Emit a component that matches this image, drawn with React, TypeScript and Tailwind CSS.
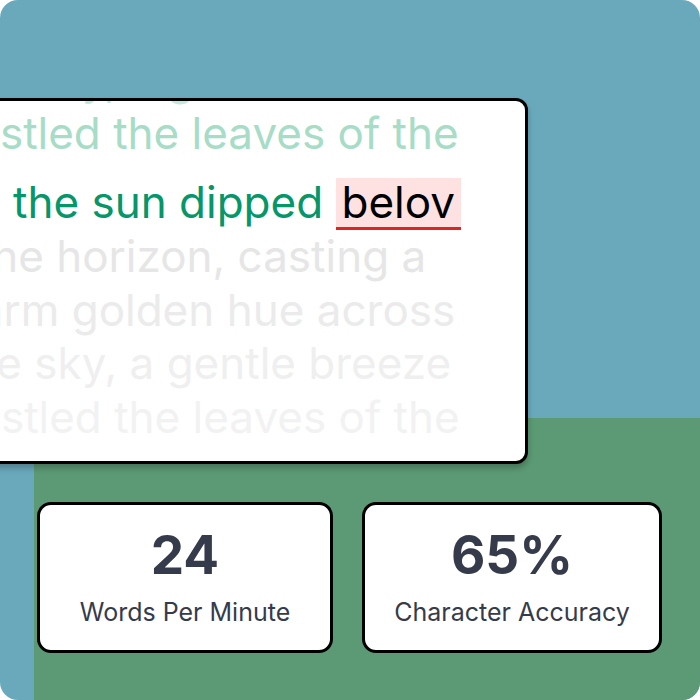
const lines = [
  { text: 'the sky, a gentle breeze', color: 'text-[#c4e8d9]', pad: 'pr-[3px]' },
  { text: 'rustled the leaves of the', color: 'text-[#a7dcc7]', pad: 'pl-[6px]' },
];

const upcoming = [
  { text: 'the horizon, casting a', color: 'text-[#e6e6e6]', pad: 'pr-[6px]' },
  { text: 'warm golden hue across', color: 'text-[#ebebeb]', pad: 'pr-[12px]' },
  { text: 'the sky, a gentle breeze', color: 'text-[#efefef]', pad: 'pr-[3px]' },
  { text: 'rustled the leaves of the', color: 'text-[#f2f2f2]', pad: 'pl-[8px]' },
];

function StatCard({ value, label, width }: { value: string; label: string; width: string }) {
  return (
    <div className={`${width} h-[151px] bg-white border-[3px] border-black rounded-[14px] flex flex-col items-center pt-[22px] text-[#363b4c]`}>
      <div className="text-[53px] leading-[56px] font-bold">{value}</div>
      <div className="mt-[14px] text-[25px] leading-[30px]">{label}</div>
    </div>
  );
}

export default function App() {
  return (
    <div className="w-[700px] h-[700px] bg-white">
      <div
        className="w-[700px] h-[700px] rounded-[18px] overflow-hidden bg-[#6aa9bc] flex flex-col"
        style={{ fontFamily: 'Inter, "Noto Sans", sans-serif' }}
      >
        <div className="h-[418px] shrink-0 pt-[98px]">
          <div className="relative z-10 ml-[-118px] w-[646px] h-[366px] bg-white border-[3px] border-black rounded-[12px] overflow-hidden shadow-[0_4px_6px_rgba(0,0,0,0.25)]">
            <div className="mt-[-48px] flex flex-col items-center text-[44px] leading-[53.5px] whitespace-nowrap">
              {lines.map((l, i) => (
                <div key={i} className={`${l.color} ${l.pad}`}>{l.text}</div>
              ))}
              <div className="pt-[16px] pl-[64px] text-[#059669]">
                the sun dipped{' '}
                <span className="inline-block px-[6px] bg-[#fee2e2] text-black border-b-[3px] border-[#dc2626] leading-[49px]">
                  belov
                </span>
              </div>
              {upcoming.map((l, i) => (
                <div key={i} className={`${l.color} ${l.pad}`}>{l.text}</div>
              ))}
            </div>
          </div>
        </div>
        <div className="flex-1 flex">
          <div className="w-[34px] shrink-0" />
          <div className="flex-1 bg-[#5c9a75] pt-[84px] pl-[3px] flex gap-[29px] items-start">
            <StatCard value="24" label="Words Per Minute" width="w-[296px]" />
            <StatCard value="65%" label="Character Accuracy" width="w-[300px]" />
          </div>
        </div>
      </div>
    </div>
  );
}
